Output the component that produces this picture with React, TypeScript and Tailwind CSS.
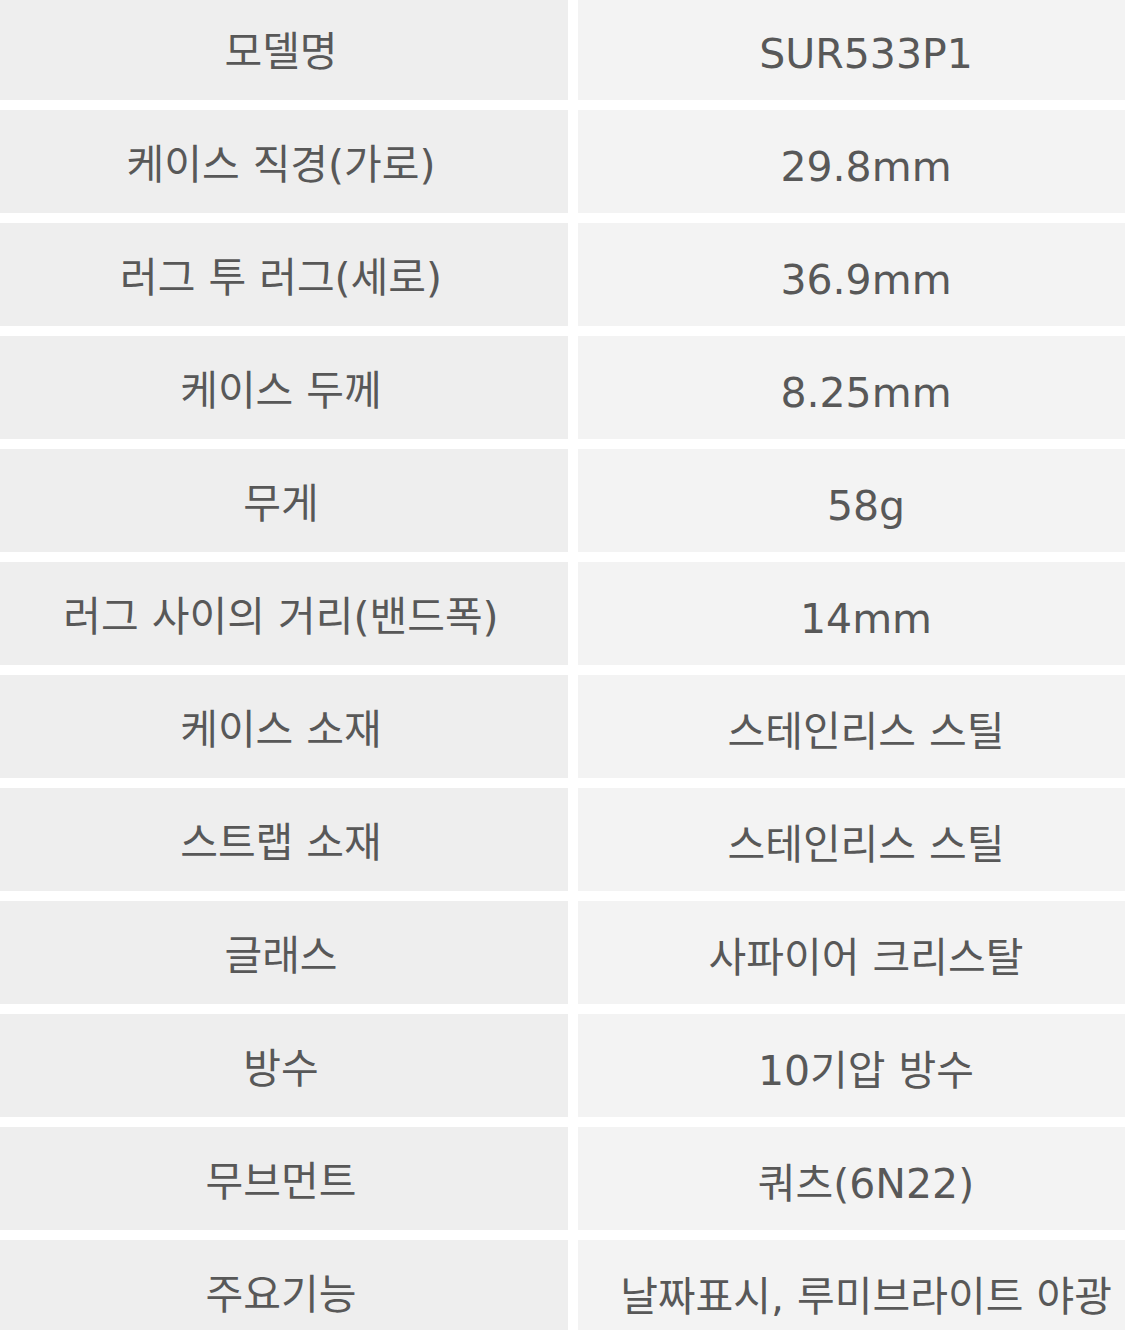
import React from 'react';

const specs: [string, string][] = [
  ['모델명', 'SUR533P1'],
  ['케이스 직경(가로)', '29.8mm'],
  ['러그 투 러그(세로)', '36.9mm'],
  ['케이스 두께', '8.25mm'],
  ['무게', '58g'],
  ['러그 사이의 거리(밴드폭)', '14mm'],
  ['케이스 소재', '스테인리스 스틸'],
  ['스트랩 소재', '스테인리스 스틸'],
  ['글래스', '사파이어 크리스탈'],
  ['방수', '10기압 방수'],
  ['무브먼트', '쿼츠(6N22)'],
  ['주요기능', '날짜표시, 루미브라이트 야광'],
];

export default function App() {
  return (
    <div className="w-[1125px] h-[1330px] overflow-hidden bg-white font-['DejaVu_Sans','Noto_Sans_CJK_KR',sans-serif] text-[#585858]">
      <div className="-mt-[3px] flex flex-col gap-[10px]">
        {specs.map(([label, value]) => (
          <div key={label} className="grid grid-cols-[568px_1fr] gap-[10px] h-[103px]">
            <div className="bg-[#eeeeee] flex items-center justify-center text-[41px] pt-[8px] pr-[6px] whitespace-nowrap">
              {label}
            </div>
            <div className="bg-[#f3f3f3] flex items-center justify-center text-[41px] pt-[12px] pl-[29px] whitespace-nowrap">
              {value}
            </div>
          </div>
        ))}
      </div>
    </div>
  );
}
